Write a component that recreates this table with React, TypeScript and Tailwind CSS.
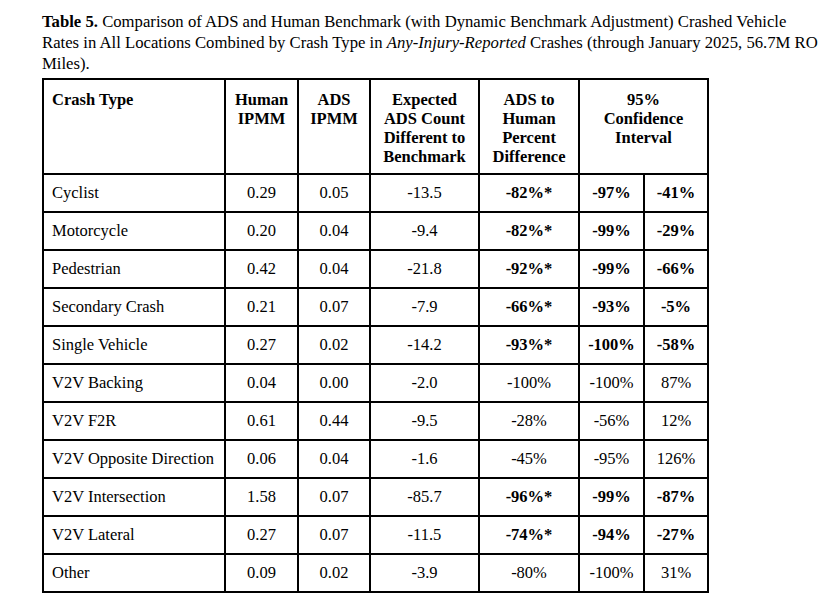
type Row = {
  type: string
  human: string
  ads: string
  expected: string
  pct: string
  lo: string
  hi: string
  sig: boolean
}

const rows: Row[] = [
  { type: 'Cyclist', human: '0.29', ads: '0.05', expected: '-13.5', pct: '-82%*', lo: '-97%', hi: '-41%', sig: true },
  { type: 'Motorcycle', human: '0.20', ads: '0.04', expected: '-9.4', pct: '-82%*', lo: '-99%', hi: '-29%', sig: true },
  { type: 'Pedestrian', human: '0.42', ads: '0.04', expected: '-21.8', pct: '-92%*', lo: '-99%', hi: '-66%', sig: true },
  { type: 'Secondary Crash', human: '0.21', ads: '0.07', expected: '-7.9', pct: '-66%*', lo: '-93%', hi: '-5%', sig: true },
  { type: 'Single Vehicle', human: '0.27', ads: '0.02', expected: '-14.2', pct: '-93%*', lo: '-100%', hi: '-58%', sig: true },
  { type: 'V2V Backing', human: '0.04', ads: '0.00', expected: '-2.0', pct: '-100%', lo: '-100%', hi: '87%', sig: false },
  { type: 'V2V F2R', human: '0.61', ads: '0.44', expected: '-9.5', pct: '-28%', lo: '-56%', hi: '12%', sig: false },
  { type: 'V2V Opposite Direction', human: '0.06', ads: '0.04', expected: '-1.6', pct: '-45%', lo: '-95%', hi: '126%', sig: false },
  { type: 'V2V Intersection', human: '1.58', ads: '0.07', expected: '-85.7', pct: '-96%*', lo: '-99%', hi: '-87%', sig: true },
  { type: 'V2V Lateral', human: '0.27', ads: '0.07', expected: '-11.5', pct: '-74%*', lo: '-94%', hi: '-27%', sig: true },
  { type: 'Other', human: '0.09', ads: '0.02', expected: '-3.9', pct: '-80%', lo: '-100%', hi: '31%', sig: false },
]

const cell = 'bg-white flex items-center justify-center'

export default function App() {
  return (
    <div className="w-[836px] h-[607px] bg-white text-black font-[Liberation_Serif] pl-[42px] pt-[11px]">
      <p className="w-[781px] text-[16.7px] leading-[21px]">
        <span className="font-bold">Table 5.</span> Comparison of ADS and Human Benchmark (with Dynamic Benchmark
        Adjustment) Crashed Vehicle Rates in All Locations Combined by Crash Type in{' '}
        <i>Any-Injury-Reported</i> Crashes (through January 2025, 56.7M RO Miles).
      </p>

      <div className="mt-[4px] inline-grid grid-cols-[180px_71px_70px_107px_98px_63px_62px] grid-rows-[93px_repeat(11,36px)] gap-[2px] p-[2px] bg-black text-[16.5px]">
        <div className="bg-white px-[8px] pt-[10px] font-bold leading-[19px]">Crash Type</div>
        <div className="bg-white pt-[10px] text-center font-bold leading-[19px]">Human<br />IPMM</div>
        <div className="bg-white pt-[10px] text-center font-bold leading-[19px]">ADS<br />IPMM</div>
        <div className="bg-white pt-[10px] text-center font-bold leading-[19px]">
          Expected<br />ADS Count<br />Different to<br />Benchmark
        </div>
        <div className="bg-white pt-[10px] text-center font-bold leading-[19px]">
          ADS to<br />Human<br />Percent<br />Difference
        </div>
        <div className="col-span-2 bg-white pt-[10px] text-center font-bold leading-[19px]">
          95%<br />Confidence<br />Interval
        </div>

        {rows.map((r) => (
          <div key={r.type} className="contents">
            <div className="bg-white flex items-center px-[8px]">{r.type}</div>
            <div className={cell}>{r.human}</div>
            <div className={cell}>{r.ads}</div>
            <div className={cell}>{r.expected}</div>
            <div className={`${cell} ${r.sig ? 'font-bold' : ''}`}>{r.pct}</div>
            <div className={`${cell} ${r.sig ? 'font-bold' : ''}`}>{r.lo}</div>
            <div className={`${cell} ${r.sig ? 'font-bold' : ''}`}>{r.hi}</div>
          </div>
        ))}
      </div>
    </div>
  )
}
